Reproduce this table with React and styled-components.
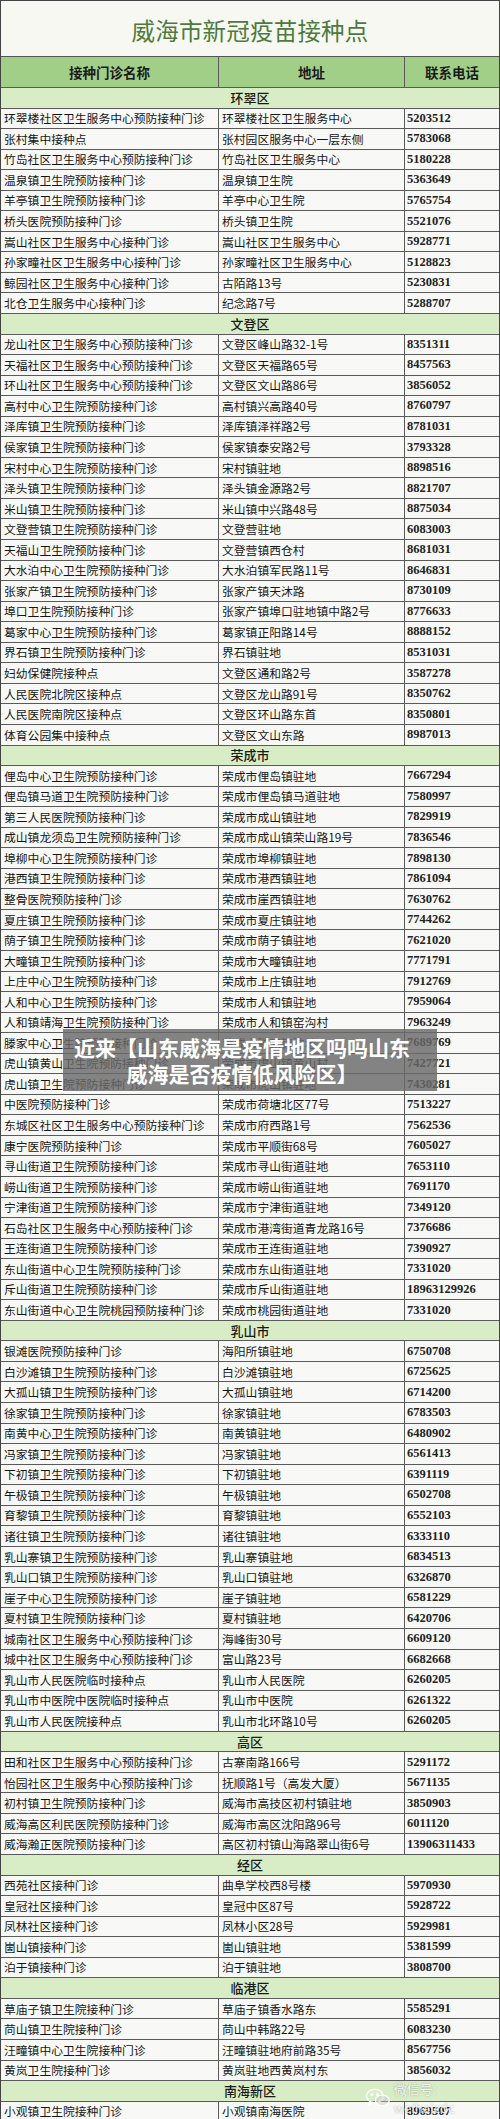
import React from "react";
import styled, { createGlobalStyle } from "styled-components";

const sections = [
  {
    name: "环翠区",
    rows: [
      ["环翠楼社区卫生服务中心预防接种门诊", "环翠楼社区卫生服务中心", "5203512"],
      ["张村集中接种点", "张村园区服务中心一层东侧", "5783068"],
      ["竹岛社区卫生服务中心预防接种门诊", "竹岛社区卫生服务中心", "5180228"],
      ["温泉镇卫生院预防接种门诊", "温泉镇卫生院", "5363649"],
      ["羊亭镇卫生院预防接种门诊", "羊亭中心卫生院", "5765754"],
      ["桥头医院预防接种门诊", "桥头镇卫生院", "5521076"],
      ["嵩山社区卫生服务中心接种门诊", "嵩山社区卫生服务中心", "5928771"],
      ["孙家疃社区卫生服务中心接种门诊", "孙家疃社区卫生服务中心", "5128823"],
      ["鲸园社区卫生服务中心接种门诊", "古陌路13号", "5230831"],
      ["北仓卫生服务中心接种门诊", "纪念路7号", "5288707"],
    ],
  },
  {
    name: "文登区",
    rows: [
      ["龙山社区卫生服务中心预防接种门诊", "文登区峰山路32-1号", "8351311"],
      ["天福社区卫生服务中心预防接种门诊", "文登区天福路65号", "8457563"],
      ["环山社区卫生服务中心预防接种门诊", "文登区文山路86号", "3856052"],
      ["高村中心卫生院预防接种门诊", "高村镇兴高路40号", "8760797"],
      ["泽库镇卫生院预防接种门诊", "泽库镇泽祥路2号", "8781031"],
      ["侯家镇卫生院预防接种门诊", "侯家镇泰安路2号", "3793328"],
      ["宋村中心卫生院预防接种门诊", "宋村镇驻地", "8898516"],
      ["泽头镇卫生院预防接种门诊", "泽头镇金源路2号", "8821707"],
      ["米山镇卫生院预防接种门诊", "米山镇中兴路48号", "8875034"],
      ["文登营镇卫生院预防接种门诊", "文登营驻地", "6083003"],
      ["天福山卫生院预防接种门诊", "文登营镇西仓村", "8681031"],
      ["大水泊中心卫生院预防接种门诊", "大水泊镇军民路11号", "8646831"],
      ["张家产镇卫生院预防接种门诊", "张家产镇天沐路", "8730109"],
      ["埠口卫生院预防接种门诊", "张家产镇埠口驻地镇中路2号", "8776633"],
      ["葛家中心卫生院预防接种门诊", "葛家镇正阳路14号", "8888152"],
      ["界石镇卫生院预防接种门诊", "界石镇驻地", "8531031"],
      ["妇幼保健院接种点", "文登区通和路2号", "3587278"],
      ["人民医院北院区接种点", "文登区龙山路91号", "8350762"],
      ["人民医院南院区接种点", "文登区环山路东首", "8350801"],
      ["体育公园集中接种点", "文登区文山东路", "8987013"],
    ],
  },
  {
    name: "荣成市",
    rows: [
      ["俚岛中心卫生院预防接种门诊", "荣成市俚岛镇驻地", "7667294"],
      ["俚岛镇马道卫生院预防接种门诊", "荣成市俚岛镇马道驻地", "7580997"],
      ["第三人民医院预防接种门诊", "荣成市成山镇驻地", "7829919"],
      ["成山镇龙须岛卫生院预防接种门诊", "荣成市成山镇荣山路19号", "7836546"],
      ["埠柳中心卫生院预防接种门诊", "荣成市埠柳镇驻地", "7898130"],
      ["港西镇卫生院预防接种门诊", "荣成市港西镇驻地", "7861094"],
      ["整骨医院预防接种门诊", "荣成市崖西镇驻地", "7630762"],
      ["夏庄镇卫生院预防接种门诊", "荣成市夏庄镇驻地", "7744262"],
      ["荫子镇卫生院预防接种门诊", "荣成市荫子镇驻地", "7621020"],
      ["大疃镇卫生院预防接种门诊", "荣成市大疃镇驻地", "7771791"],
      ["上庄中心卫生院预防接种门诊", "荣成市上庄镇驻地", "7912769"],
      ["人和中心卫生院预防接种门诊", "荣成市人和镇驻地", "7959064"],
      ["人和镇靖海卫生院预防接种门诊", "荣成市人和镇窑沟村", "7963249"],
      ["滕家中心卫生院预防接种门诊", "荣成市滕家镇驻地", "7689769"],
      ["虎山镇黄山卫生院预防接种门诊", "荣成市虎山镇黄山村", "7427721"],
      ["虎山镇卫生院预防接种门诊", "荣成市虎山镇驻地", "7430281"],
      ["中医院预防接种门诊", "荣成市荷塘北区77号", "7513227"],
      ["东城区社区卫生服务中心预防接种门诊", "荣成市府西路1号", "7562536"],
      ["康宁医院预防接种门诊", "荣成市平顺街68号", "7605027"],
      ["寻山街道卫生院预防接种门诊", "荣成市寻山街道驻地", "7653110"],
      ["崂山街道卫生院预防接种门诊", "荣成市崂山街道驻地", "7691170"],
      ["宁津街道卫生院预防接种门诊", "荣成市宁津街道驻地", "7349120"],
      ["石岛社区卫生服务中心预防接种门诊", "荣成市港湾街道青龙路16号", "7376686"],
      ["王连街道卫生院预防接种门诊", "荣成市王连街道驻地", "7390927"],
      ["东山街道中心卫生院预防接种门诊", "荣成市东山街道驻地", "7331020"],
      ["斥山街道卫生院预防接种门诊", "荣成市斥山街道驻地", "18963129926"],
      ["东山街道中心卫生院桃园预防接种门诊", "荣成市桃园街道驻地", "7331020"],
    ],
  },
  {
    name: "乳山市",
    rows: [
      ["银滩医院预防接种门诊", "海阳所镇驻地", "6750708"],
      ["白沙滩镇卫生院预防接种门诊", "白沙滩镇驻地", "6725625"],
      ["大孤山镇卫生院预防接种门诊", "大孤山镇驻地", "6714200"],
      ["徐家镇卫生院预防接种门诊", "徐家镇驻地", "6783503"],
      ["南黄中心卫生院预防接种门诊", "南黄镇驻地", "6480902"],
      ["冯家镇卫生院预防接种门诊", "冯家镇驻地", "6561413"],
      ["下初镇卫生院预防接种门诊", "下初镇驻地", "6391119"],
      ["午极镇卫生院预防接种门诊", "午极镇驻地", "6502708"],
      ["育黎镇卫生院预防接种门诊", "育黎镇驻地", "6552103"],
      ["诸往镇卫生院预防接种门诊", "诸往镇驻地", "6333110"],
      ["乳山寨镇卫生院预防接种门诊", "乳山寨镇驻地", "6834513"],
      ["乳山口镇卫生院预防接种门诊", "乳山口镇驻地", "6326870"],
      ["崖子中心卫生院预防接种门诊", "崖子镇驻地", "6581229"],
      ["夏村镇卫生院预防接种门诊", "夏村镇驻地", "6420706"],
      ["城南社区卫生服务中心预防接种门诊", "海峰街30号", "6609120"],
      ["城中社区卫生服务中心预防接种门诊", "富山路23号", "6682668"],
      ["乳山市人民医院临时接种点", "乳山市人民医院", "6260205"],
      ["乳山市中医院中医院临时接种点", "乳山市中医院", "6261322"],
      ["乳山市人民医院接种点", "乳山市北环路10号", "6260205"],
    ],
  },
  {
    name: "高区",
    rows: [
      ["田和社区卫生服务中心预防接种门诊", "古寨南路166号", "5291172"],
      ["怡园社区卫生服务中心预防接种门诊", "抚顺路1号（高发大厦）", "5671135"],
      ["初村镇卫生院预防接种门诊", "威海市高技区初村镇驻地", "3850903"],
      ["威海高区利民医院预防接种门诊", "威海市高区沈阳路96号", "6011120"],
      ["威海瀚正医院预防接种门诊", "高区初村镇山海路翠山街6号", "13906311433"],
    ],
  },
  {
    name: "经区",
    rows: [
      ["西苑社区接种门诊", "曲阜学校西8号楼", "5970930"],
      ["皇冠社区接种门诊", "皇冠中区87号", "5928722"],
      ["凤林社区接种门诊", "凤林小区28号", "5929981"],
      ["崮山镇接种门诊", "崮山镇驻地", "5381599"],
      ["泊于镇接种门诊", "泊于镇驻地", "3808700"],
    ],
  },
  {
    name: "临港区",
    rows: [
      ["草庙子镇卫生院接种门诊", "草庙子镇香水路东", "5585291"],
      ["苘山镇卫生院接种门诊", "苘山中韩路22号", "6083230"],
      ["汪疃镇中心卫生院接种门诊", "汪疃镇驻地府前路35号", "8567756"],
      ["黄岚卫生院接种门诊", "黄岚驻地西黄岚村东", "3856032"],
    ],
  },
  {
    name: "南海新区",
    rows: [["小观镇卫生院接种门诊", "小观镇南海医院", "8969507"]],
  },
];

export default function App() {
  return (
    <Page>
      <GlobalStyle />
      <Title>威海市新冠疫苗接种点</Title>
      <HeadRow>
        <HeadCell>接种门诊名称</HeadCell>
        <HeadCell>地址</HeadCell>
        <HeadCell last>联系电话</HeadCell>
      </HeadRow>
      {sections.map((s) => (
        <React.Fragment key={s.name}>
          <AreaRow>{s.name}</AreaRow>
          {s.rows.map((r, i) => (
            <Row key={s.name + i}>
              <Cell>{r[0]}</Cell>
              <Cell>{r[1]}</Cell>
              <Phone>{r[2]}</Phone>
            </Row>
          ))}
        </React.Fragment>
      ))}

      {/* caption strip laid over the table */}
      <Caption>
        <span>近来【山东威海是疫情地区吗吗山东</span>
        <span>威海是否疫情低风险区】</span>
      </Caption>

      <Watermark>
        <svg width="26" height="20" viewBox="0 0 26 20" fill="none" stroke="#fff" strokeWidth="1.3">
          <ellipse cx="10" cy="8" rx="8.5" ry="6.8" />
          <path d="M5 13.5 L3.5 17 L8 14.6" />
          <ellipse cx="17.5" cy="12.5" rx="7" ry="5.5" fill="rgba(200,200,200,0.4)" />
          <circle cx="7" cy="6.5" r="0.9" fill="#fff" />
          <circle cx="12.5" cy="6.5" r="0.9" fill="#fff" />
        </svg>
        <span>微信号: weihaicdc</span>
      </Watermark>
    </Page>
  );
}

const GlobalStyle = createGlobalStyle`
  html, body {
    margin: 0;
    padding: 0;
    background: #f7f8f4;
  }
`;

const Page = styled.div`
  position: relative;
  width: 500px;
  height: 2119px;
  overflow: hidden;
  box-sizing: border-box;
  border-left: 1px solid #444;
  border-right: 1px solid #444;
  border-top: 1px solid #444;
  background: #f7f8f4;
  font-family: "Noto Sans CJK SC", "Noto Sans", sans-serif;
  color: #151515;
`;

const Title = styled.div`
  height: 56px;
  display: flex;
  align-items: center;
  justify-content: center;
  padding-top: 2px;
  box-sizing: border-box;
  background: #f6f8f1;
  color: #4d7a3e;
  font-size: 23.5px;
  letter-spacing: 0.2px;
  border-bottom: 1px solid #555;
`;

const grid = `
  display: grid;
  grid-template-columns: 218px 186px 1fr;
  box-sizing: border-box;
  border-bottom: 1px solid #5a5a5a;
`;

const HeadRow = styled.div`
  ${grid}
  height: 31px;
  background: #a2cf88;
`;

const HeadCell = styled.div`
  display: flex;
  align-items: center;
  justify-content: center;
  font-size: 13.5px;
  font-weight: 700;
  color: #1a1a1a;
  border-right: ${(p) => (p.last ? "none" : "1px solid #5a5a5a")};
`;

const AreaRow = styled.div`
  height: 20.55px;
  box-sizing: border-box;
  border-bottom: 1px solid #5a5a5a;
  background: #d8edc6;
  display: flex;
  align-items: center;
  justify-content: center;
  font-size: 13px;
  line-height: 1.2;
  font-weight: 500;
  color: #1a1a1a;
`;

const Row = styled.div`
  ${grid}
  height: 20.55px;
  background: #f8f9f6;
`;

const Cell = styled.div`
  display: flex;
  align-items: center;
  min-width: 0;
  padding-left: 3px;
  font-size: 11.8px;
  line-height: 1.2;
  white-space: nowrap;
  overflow: hidden;
  border-right: 1px solid #5a5a5a;
`;

const Phone = styled.div`
  display: flex;
  align-items: center;
  min-width: 0;
  padding-left: 2px;
  font-family: "Liberation Serif", "Times New Roman", serif;
  font-weight: 700;
  font-size: 12.5px;
  line-height: 1.2;
  color: #222;
`;

const Caption = styled.div`
  position: absolute;
  left: 62px;
  top: 1028px;
  width: 374px;
  height: 62px;
  background: rgba(105, 105, 105, 0.82);
  display: flex;
  flex-direction: column;
  align-items: center;
  justify-content: center;
  color: #fff;
  font-weight: 700;
  font-size: 21px;
  line-height: 26px;
  padding-right: 16px;
  box-sizing: border-box;
`;

const Watermark = styled.div`
  position: absolute;
  left: 364px;
  top: 2078px;
  display: flex;
  align-items: center;
  gap: 3px;
  color: rgba(255, 255, 255, 0.85);
  font-size: 13px;
  text-shadow: 0 0 2px rgba(0, 0, 0, 0.35);
  font-family: "Noto Sans CJK SC", "Noto Sans", sans-serif;
`;
